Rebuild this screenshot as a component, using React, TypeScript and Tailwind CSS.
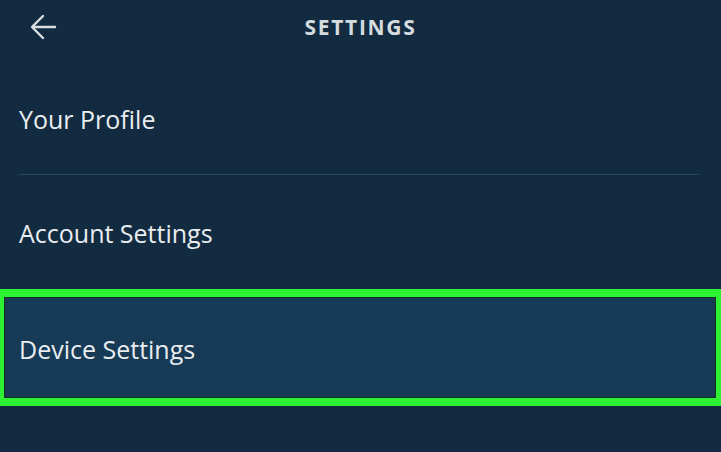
const rows = ["Your Profile", "Account Settings"];

function BackArrow() {
  return (
    <svg width="27" height="26" viewBox="0 0 27 26" fill="none" stroke="#d9dee2" strokeWidth="2.4" strokeLinecap="round" strokeLinejoin="round">
      <path d="M25 13H3" />
      <path d="M13 2L2 13l11 11" />
    </svg>
  );
}

export default function App() {
  return (
    <div
      className="w-[721px] h-[452px] overflow-hidden bg-[#132b41] flex flex-col text-[#e9edf0]"
      style={{ fontFamily: '"Open Sans", "Noto Sans", sans-serif' }}
    >
      <header className="h-[52px] shrink-0 grid grid-cols-[1fr_auto_1fr] items-center">
        <div className="pl-[30px] pt-[1px] flex items-center">
          <BackArrow />
        </div>
        <h1 className="text-[21px] font-bold tracking-[1.7px] text-[#d5dbdf] leading-none pt-[2px]">SETTINGS</h1>
        <div />
      </header>

      <div className="h-[122px] shrink-0 flex items-center pt-[12px] pl-[19px] text-[25px] leading-none">
        {rows[0]}
      </div>
      <div className="h-px shrink-0 ml-[19px] mr-[22px] bg-[#294560]" />
      <div className="h-[114px] shrink-0 flex items-center pt-[3px] pl-[19px] text-[25px] leading-none">
        {rows[1]}
      </div>

      <div className="h-[117px] shrink-0 border-t-8 border-b-8 border-l-4 border-r-[5px] border-[#2cf233]">
        <div className="h-full bg-[#173a56] border border-[#0f3322] flex items-center pt-[3px] pl-[14px] text-[25px] leading-none">
          Device Settings
        </div>
      </div>
    </div>
  );
}
